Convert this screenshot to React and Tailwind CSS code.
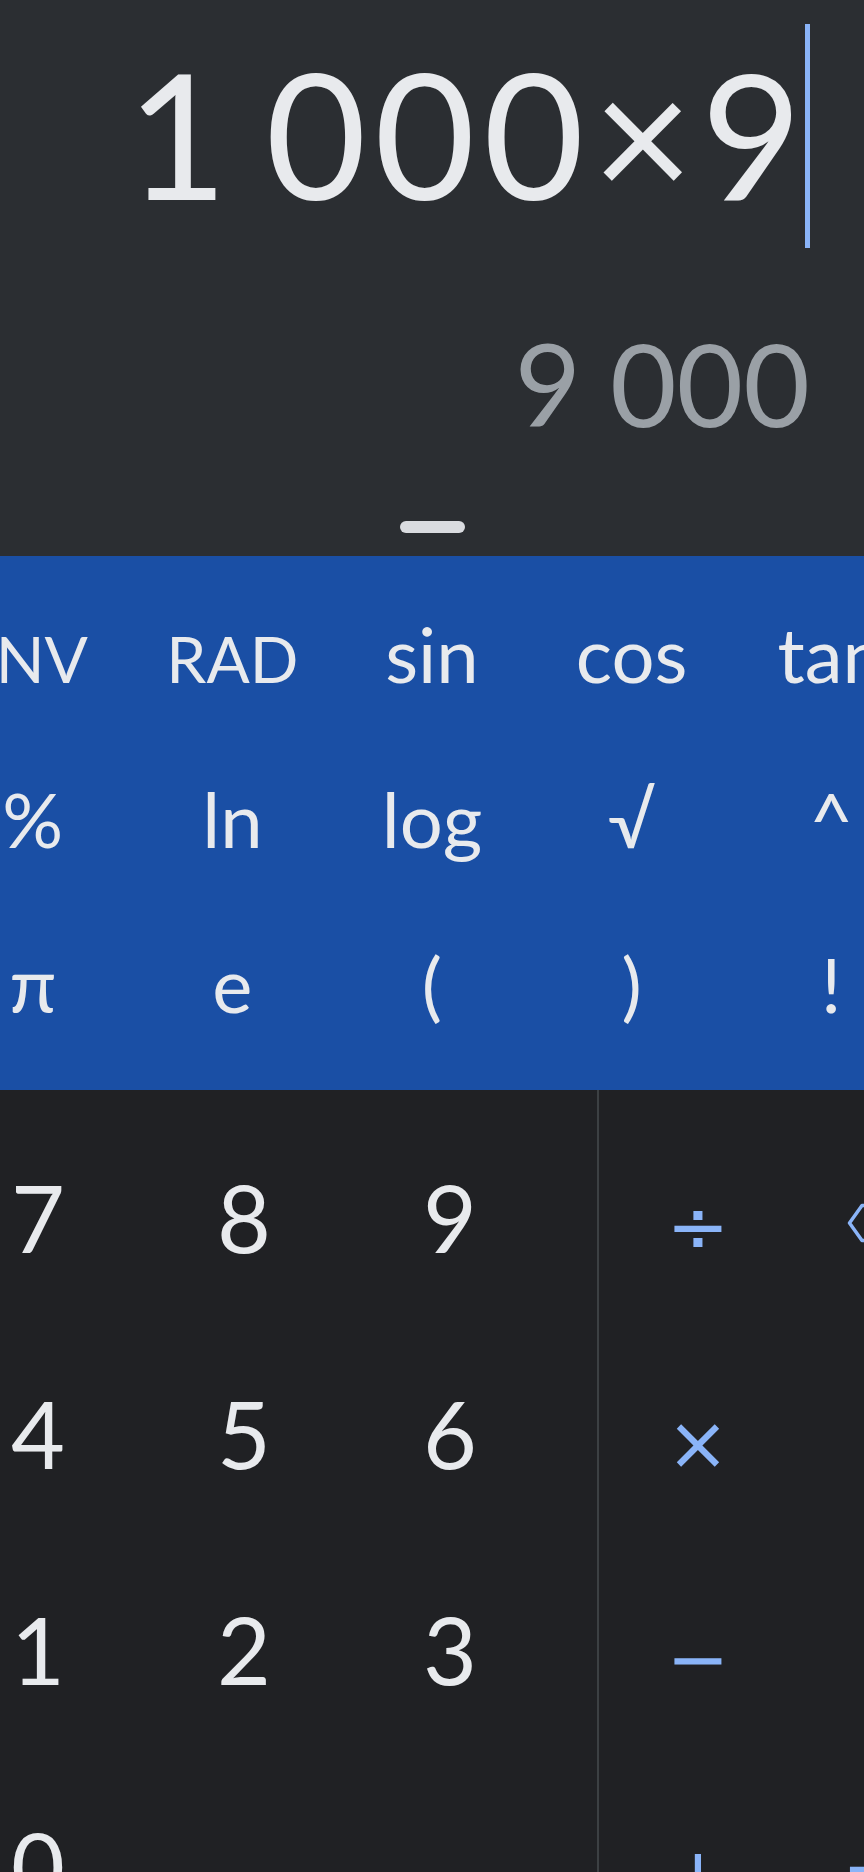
import React from "react";

const sciRows = [
  ["INV", "RAD", "sin", "cos", "tan"],
  ["%", "ln", "log", "√", "^"],
  ["π", "e", "(", ")", "!"],
];

const digitRows = [
  ["7", "8", "9"],
  ["4", "5", "6"],
  ["1", "2", "3"],
  ["0", ".", ""],
];

const opRows = [
  ["÷", "back"],
  ["×", ""],
  ["−", ""],
  ["+", "="],
];

function Backspace() {
  return (
    <svg width="54" height="40" viewBox="0 0 54 40" fill="none" className="-mt-2">
      <path
        d="M15 2.5H48a3.5 3.5 0 0 1 3.5 3.5v28a3.5 3.5 0 0 1-3.5 3.5H15L2.5 20Z"
        stroke="#8ab4f8"
        strokeWidth="3.5"
        strokeLinejoin="round"
      />
      <path d="M24 12l16 16M40 12L24 28" stroke="#8ab4f8" strokeWidth="3.5" strokeLinecap="round" />
    </svg>
  );
}

function SciKey({ label }) {
  // mode toggles use a smaller label than the function keys
  const small = label === "INV" || label === "RAD";
  return (
    <div
      className={
        small
          ? "flex items-center justify-center text-[64px] leading-none text-[#e8eaed]"
          : "flex items-center justify-center pb-[10px] text-[76px] leading-none text-[#e8eaed]"
      }
    >
      {label}
    </div>
  );
}

export default function App() {
  return (
    <div className="w-[864px] h-[1872px] overflow-hidden flex flex-col bg-[#202124] [font-family:Lato,'Liberation_Sans',sans-serif]">
      {/* display */}
      <section className="h-[556px] flex-none flex flex-col bg-[#2b2e32]">
        <div className="h-[264px] flex justify-end items-start pt-[24px] pr-[54px]">
          <span className="mt-[22px] text-[174px] leading-none [letter-spacing:8px] text-[#e8eaed] whitespace-nowrap">
            1{"\u2009"}000×9
          </span>
          <span className="-ml-[5px] w-[5px] h-[224px] bg-[#8ab4f8]" />
        </div>
        <div className="mt-[61px] flex justify-end pr-[54px]">
          <span className="text-[115px] leading-none text-[#9aa0a6] whitespace-nowrap">9{"\u202F"}000</span>
        </div>
        <div className="mt-[81px] mx-auto w-[65px] h-[12px] rounded-full bg-[#dadce0]" />
      </section>

      {/* scientific keys */}
      <section className="h-[534px] flex-none bg-[#1a4fa5] py-[20px] overflow-hidden">
        <div className="w-[998px] -ml-[67px] grid grid-cols-5 grid-rows-[165px_165px_165px]">
          {sciRows.flat().map((k, i) => (
            <SciKey key={i} label={k} />
          ))}
        </div>
      </section>

      {/* number pad and operators */}
      <section className="flex-1 flex overflow-hidden">
        <div className="w-[597px] flex-none overflow-hidden pt-[19px]">
          <div className="w-[618px] -ml-[65px] grid grid-cols-3 auto-rows-[216px]">
            {digitRows.flat().map((k, i) => (
              <div key={i} className="flex items-center justify-center text-[93px] leading-none text-[#e8eaed]">
                {k}
              </div>
            ))}
          </div>
        </div>
        <div className="w-[2px] flex-none bg-[#3c4043]" />
        <div className="flex-1 overflow-hidden pt-[29px]">
          <div className="w-[351px] grid grid-cols-[198px_153px] auto-rows-[216px]">
            {opRows.flat().map((k, i) => (
              <div
                key={i}
                className="flex items-center justify-center text-[75px] leading-none text-[#8ab4f8] [font-family:'DejaVu_Sans',sans-serif]"
              >
                {k === "back" ? <Backspace /> : k}
              </div>
            ))}
          </div>
        </div>
      </section>
    </div>
  );
}
